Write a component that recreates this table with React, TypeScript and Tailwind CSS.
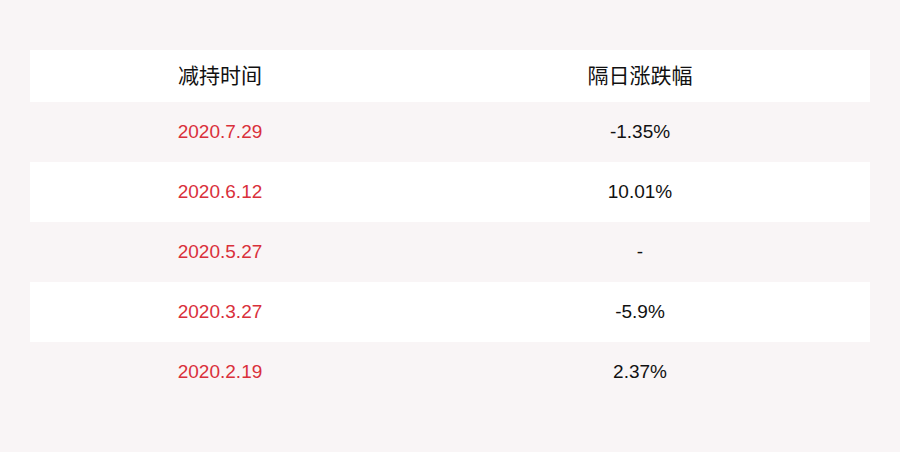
export default function App() {
  const rows = [
    ["2020.7.29", "-1.35%"],
    ["2020.6.12", "10.01%"],
    ["2020.5.27", "-"],
    ["2020.3.27", "-5.9%"],
    ["2020.2.19", "2.37%"],
  ];
  return (
    <div className="w-[900px] h-[452px] bg-[#f9f5f6] pt-[50px] px-[30px]" style={{ fontFamily: '"Liberation Sans", "Noto Sans CJK SC", sans-serif' }}>
      <div className="flex h-[52px] bg-white items-center text-[21px] text-[#111]">
        <div className="w-[380px] text-center">减持时间</div>
        <div className="flex-1 text-center">隔日涨跌幅</div>
      </div>
      {rows.map((r, i) => (
        <div key={i} className={`flex h-[60px] items-center text-[19px] ${i % 2 === 1 ? "bg-white" : ""}`}>
          <div className="w-[380px] text-center text-[#d9303b]">{r[0]}</div>
          <div className="flex-1 text-center text-[#111]">{r[1]}</div>
        </div>
      ))}
    </div>
  );
}
